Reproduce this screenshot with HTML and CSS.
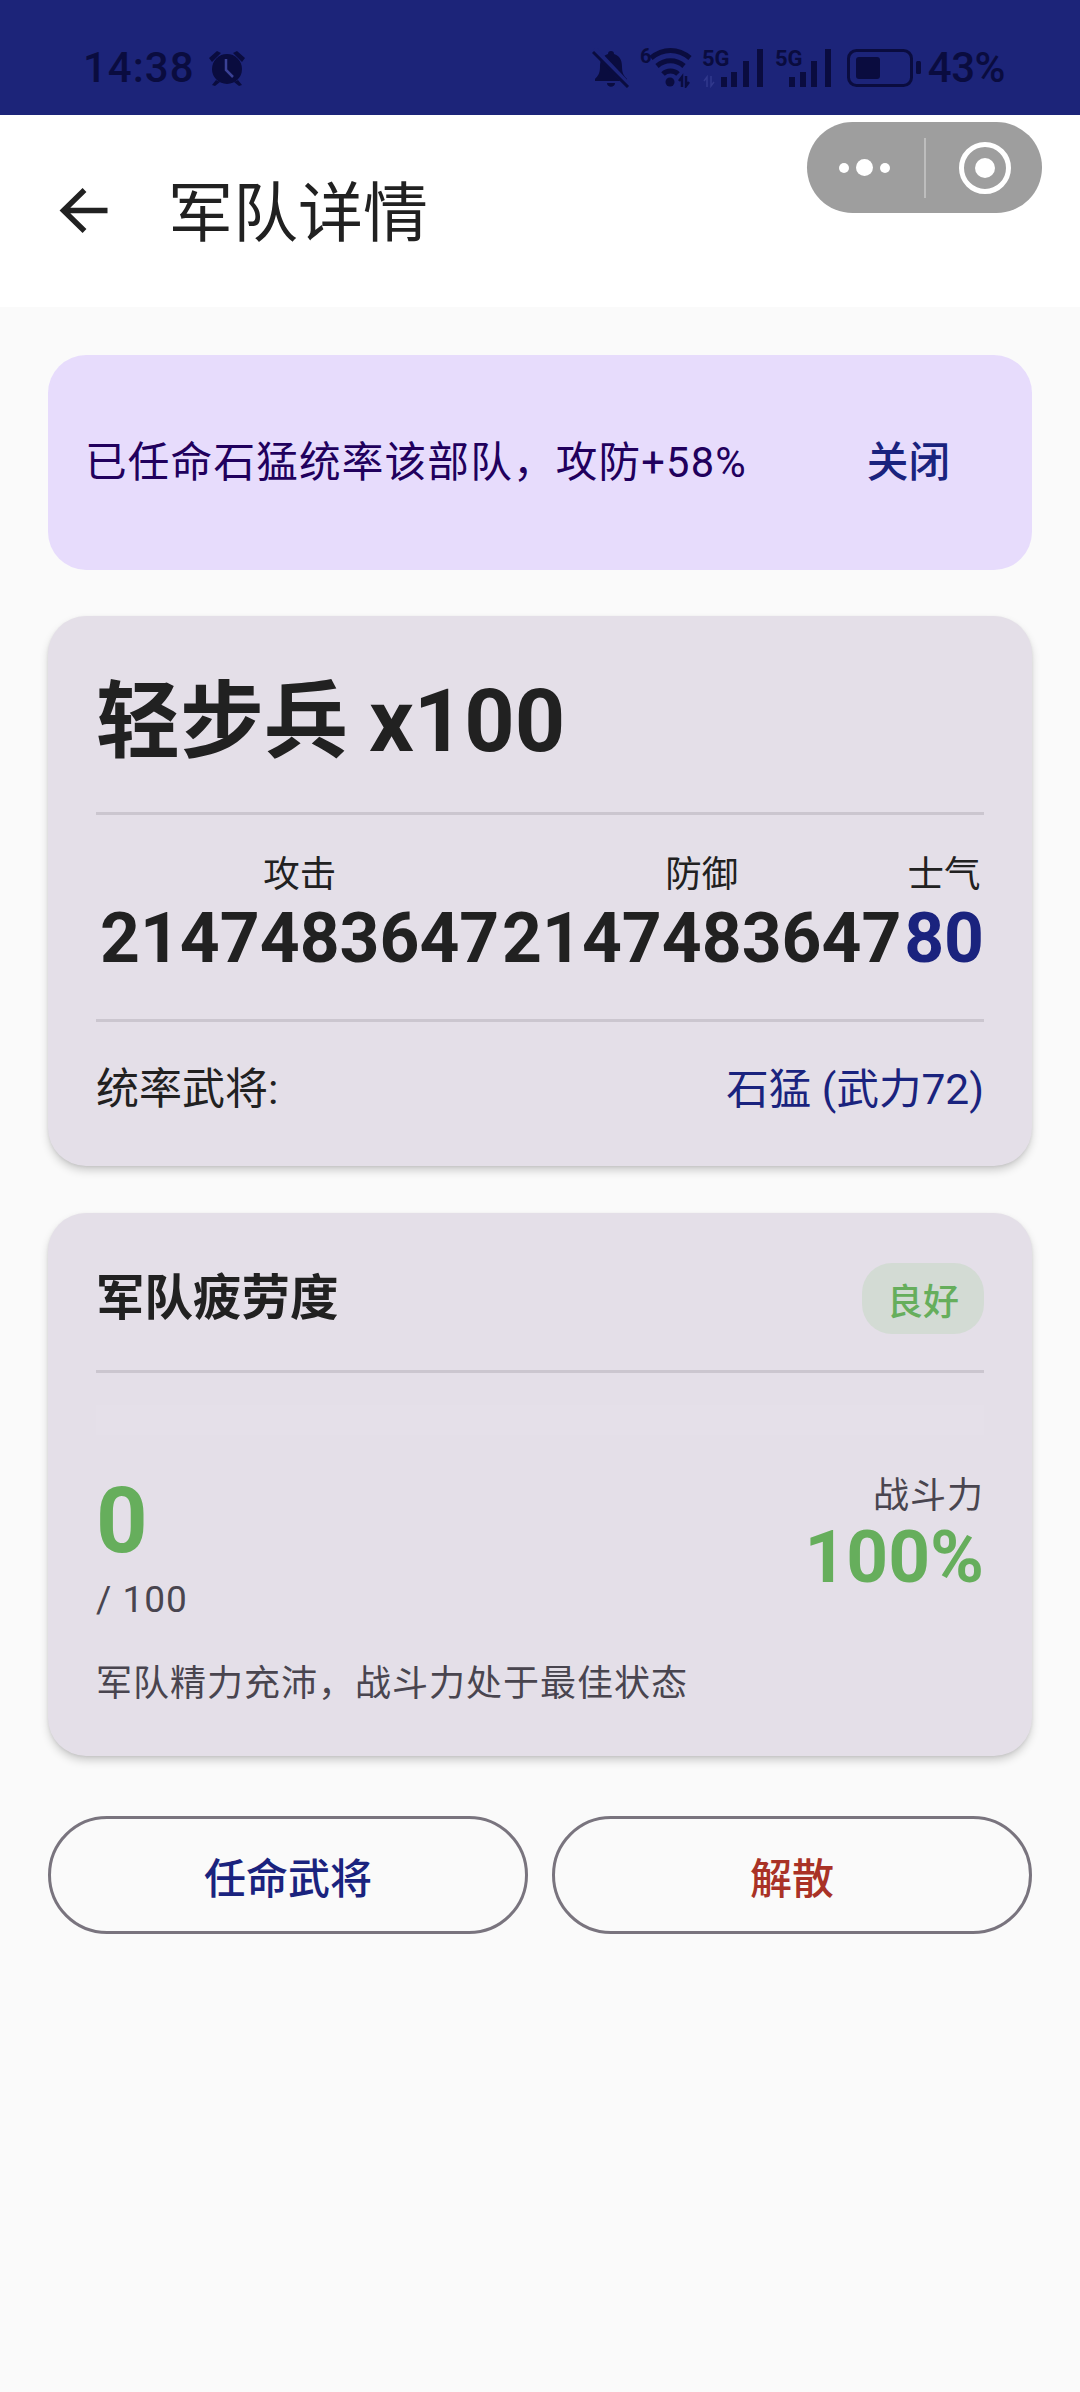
FILE: index.html
```html
<!DOCTYPE html>
<html lang="zh-CN">
<head>
<meta charset="utf-8">
<title>军队详情</title>
<link rel="stylesheet" href="styles.css">
</head>
<body>
<div class="phone">
  <header class="status">
    <div class="status-left">
      <span class="clock">14:38</span>
      <svg class="ico-alarm" viewBox="0 0 38 38"><circle cx="19" cy="20" r="15" fill="#0a0c3f"/><path d="M1 9 9 2l4 2-9 9zM37 9l-8-7-4 2 9 9zM8 31l-4 5 3 1 5-4zM30 31l4 5-3 1-5-4z" fill="#0a0c3f"/><path d="M18 10v11l7 7" fill="none" stroke="#3b4196" stroke-width="2.5"/></svg>
    </div>
    <div class="status-right">
      <svg class="ico-bell" viewBox="0 0 38 40"><path d="M19 3c2 0 3 1 3 3 7 2 8 8 8 13 0 6 2 9 5 12v2H3v-2c3-3 5-6 5-12 0-5 1-11 8-13 0-2 1-3 3-3zM15 35h8c0 5-8 5-8 0z" fill="#0a0c3f"/><path d="M2 1 37 38" stroke="#1c2479" stroke-width="6"/><path d="M1 4 36 39" stroke="#0a0c3f" stroke-width="3"/></svg>
      <svg class="ico-wifi" viewBox="0 -6 52 46"><text x="0" y="15" class="svg-tiny">6</text><path d="M11 10C23 0 38 0 50 10M17 18c8-7 19-7 27 0M23 26c4-4 11-4 15 0" fill="none" stroke="#0a0c3f" stroke-width="5"/><circle cx="30" cy="34" r="4.500" fill="#0a0c3f"/><path d="M42 39V29l-3 4M46 28v10l3-4" fill="none" stroke="#0a0c3f" stroke-width="2.500"/></svg>
      <svg class="ico-sig" viewBox="0 -6 62 46"><text x="0" y="18" class="svg-five">5G</text><path d="M5 39V29l-3 4M9 28v10l3-4" fill="none" stroke="#3b4196" stroke-width="1.500" opacity=".7"/><path d="M19 29h6v10h-6zM29 24h6v15h-6zM41 13h6v26h-6zM55 1h6v38h-6z" fill="#0a0c3f"/></svg>
      <svg class="ico-sig ico-sig2" viewBox="0 -6 57 46"><text x="0" y="18" class="svg-five">5G</text><path d="M14 29h6v10h-6zM25 24h6v15h-6zM36 13h6v26h-6zM50 1h6v38h-6z" fill="#0a0c3f"/></svg>
      <svg class="ico-batt" viewBox="0 0 74 38"><rect x="1.500" y="1.500" width="63" height="35" rx="8" fill="none" stroke="#0a0c3f" stroke-width="3"/><rect x="9" y="8" width="24" height="22" rx="3" fill="#0a0c3f"/><rect x="69" y="12" width="5" height="13" rx="1.500" fill="#0a0c3f"/></svg>
      <span class="batt-text">43%</span>
    </div>
  </header>

  <nav class="appbar">
    <svg class="back" viewBox="0 0 50 48"><path d="M49 23.500H5M26 3 5 23.500 26 44" fill="none" stroke="#212121" stroke-width="5.500"/></svg>
    <h1 class="appbar-title">军队详情</h1>
    <div class="capsule">
      <span class="cap-more"><i class="dot"></i><i class="dot dot-big"></i><i class="dot"></i></span>
      <span class="cap-sep"></span>
      <span class="cap-target"><i class="cap-core"></i></span>
    </div>
  </nav>

  <main class="content">
    <section class="banner">
      <p class="banner-msg">已任命石猛统率该部队，攻防+58%</p>
      <span class="banner-act">关闭</span>
    </section>

    <section class="card card-army">
      <h2 class="army-name">轻步兵 <span class="army-count">x100</span></h2>
      <hr class="rule">
      <div class="stats">
        <div class="stat"><span class="stat-label">攻击</span><span class="stat-value">2147483647</span></div>
        <div class="stat"><span class="stat-label">防御</span><span class="stat-value">2147483647</span></div>
        <div class="stat"><span class="stat-label">士气</span><span class="stat-value stat-blue">80</span></div>
      </div>
      <hr class="rule">
      <div class="general">
        <span class="general-label">统率武将:</span>
        <span class="general-name">石猛 (武力72)</span>
      </div>
    </section>

    <section class="card card-fatigue">
      <div class="fatigue-head">
        <h3 class="fatigue-title">军队疲劳度</h3>
        <span class="badge">良好</span>
      </div>
      <hr class="rule">
      <div class="track"></div>
      <div class="fatigue-nums">
        <div class="fatigue-left">
          <span class="fatigue-value">0</span>
          <span class="fatigue-max">/ 100</span>
        </div>
        <div class="fatigue-right">
          <span class="power-label">战斗力</span>
          <span class="power-value">100%</span>
        </div>
      </div>
      <p class="fatigue-note">军队精力充沛，战斗力处于最佳状态</p>
    </section>

    <div class="actions">
      <button class="btn btn-blue">任命武将</button>
      <button class="btn btn-red">解散</button>
    </div>
  </main>
</div>
</body>
</html>
```

FILE: styles.css
```css
* { box-sizing: border-box; }
html, body { margin: 0; padding: 0; }
body {
  width: 1080px;
  height: 2392px;
  overflow: hidden;
  background: #fafafa;
  color: #212121;
  font-family: Roboto, "Noto Sans CJK SC", sans-serif;
}
.phone { display: flex; flex-direction: column; height: 2392px; }

/* status bar */
.status {
  height: 115px;
  background: #1c2479;
  color: #0a0c3f;
  display: flex;
  justify-content: space-between;
  padding: 48px 75px 0 83px;
  font-weight: 500;
  font-size: 42px;
  line-height: 40px;
}
.status-left { display: flex; gap: 13px; height: 40px; align-items: center; }
.status-right { display: flex; height: 40px; align-items: center; }
.clock { letter-spacing: 1px; }
.ico-alarm { width: 38px; height: 38px; }
.ico-bell { width: 38px; height: 40px; margin-right: 10px; }
.ico-wifi { width: 52px; height: 46px; margin-right: 10px; align-self: flex-end; }
.ico-sig { width: 62px; height: 46px; margin-right: 11px; align-self: flex-end; }
.ico-sig2 { width: 57px; margin-right: 15px; }
.ico-batt { width: 74px; height: 38px; margin-right: 7px; }
.batt-text { letter-spacing: -.5px; }
.svg-tiny { font: 700 20px Roboto, sans-serif; fill: #0a0c3f; }
.svg-five { font: 700 22px Roboto, sans-serif; fill: #0a0c3f; }

/* app bar */
.appbar {
  position: relative;
  height: 192px;
  background: #fff;
  display: flex;
  align-items: center;
  padding-left: 58px;
  gap: 59px;
}
.back { width: 51px; height: 48px; }
.appbar-title { margin: 5px 0 0; font-size: 65px; font-weight: 400; line-height: 80px; }
.capsule {
  position: absolute;
  left: 807px;
  top: 7px;
  width: 235px;
  height: 91px;
  border-radius: 46px;
  background: #9e9e9e;
  display: flex;
  align-items: center;
}
.cap-more { width: 117px; display: flex; align-items: center; justify-content: flex-end; gap: 7px; padding-right: 34px; }
.dot { width: 10px; height: 10px; border-radius: 50%; background: #fff; display: block; }
.dot-big { width: 17px; height: 17px; }
.cap-sep { width: 2px; height: 60px; background: #bdbdbd; }
.cap-target {
  margin-left: 33px;
  width: 52px;
  height: 52px;
  border: 5px solid #fff;
  border-radius: 50%;
  display: flex;
  align-items: center;
  justify-content: center;
}
.cap-core { width: 20px; height: 20px; border-radius: 50%; background: #fff; display: block; }

/* content */
.content { padding: 48px 47px 0; display: flex; flex-direction: column; }
.banner {
  margin: 0 1px;
  height: 215px;
  border-radius: 38px;
  background: #e7dcfc;
  display: flex;
  align-items: center;
  justify-content: space-between;
  padding: 0 82px 0 37px;
}
.banner-msg { margin: 0; font-size: 41.600px; line-height: 60px; color: #21005d; letter-spacing: 1.200px; }
.banner-act { font-size: 41.600px; line-height: 60px; font-weight: 500; color: #1a237e; }

.card {
  margin: 0 1px;
  background: #e4dfe8;
  border-radius: 38px;
  box-shadow: 0 5px 10px -1px rgba(0,0,0,.2), 0 1px 3px rgba(0,0,0,.07);
  padding: 0 48px;
}
.rule { margin: 0; border: 0; height: 3px; background: #cbc6cf; }

.card-army { margin-top: 46px; height: 550px; padding-top: 50px; }
.army-name { margin: 0; height: 146px; font-size: 84px; line-height: 114px; font-weight: 700; }
.army-count { font-size: 88px; line-height: 1; }
.stats { display: flex; justify-content: space-between; height: 204px; padding: 37px 0 0 4px; }
.stat { display: flex; flex-direction: column; align-items: center; }
.stat-label { font-size: 36.500px; line-height: 44px; padding-top: 1px; }
.stat-value { font-size: 69.600px; line-height: 82px; font-weight: 700; }
.stat-blue { color: #1a237e; }
.general { display: flex; justify-content: space-between; align-items: center; height: 126px; font-size: 43px; }
.general-label { color: #212121; }
.general-name { color: #1a237e; font-size: 42.500px; }

.card-fatigue { margin-top: 47px; height: 543px; padding-top: 50px; }
.fatigue-head { display: flex; justify-content: space-between; align-items: center; height: 71px; margin-bottom: 36px; }
.fatigue-title { margin: 0; font-size: 48.500px; line-height: 71px; font-weight: 700; }
.badge {
  width: 122px;
  height: 71px;
  border-radius: 30px;
  background: #d3dbd4;
  color: #66ae5c;
  font-size: 36px;
  font-weight: 500;
  display: flex;
  align-items: center;
  justify-content: center;
}
.track { height: 30px; margin-top: 32px; background: #e5e0e9; }
.fatigue-nums { display: flex; justify-content: space-between; margin-top: 30px; height: 190px; }
.fatigue-left, .fatigue-right { display: flex; flex-direction: column; }
.fatigue-right { align-items: flex-end; }
.fatigue-value { font-size: 90px; line-height: 106px; font-weight: 700; color: #66ae5c; padding-top: 4px; }
.fatigue-max { font-size: 37px; line-height: 50px; color: #49454f; letter-spacing: 1px; }
.power-label { font-size: 36px; line-height: 50px; color: #49454f; letter-spacing: 1px; margin-top: 6px; }
.power-value { font-size: 73px; line-height: 72px; font-weight: 700; color: #66ae5c; }
.fatigue-note { margin: 4px 0 0; font-size: 36px; line-height: 50px; color: #49454f; letter-spacing: 1px; }

.actions { display: flex; justify-content: space-between; margin: 60px 1px 0; }
.btn {
  width: 480px;
  height: 118px;
  border: 3px solid #79747e;
  border-radius: 59px;
  background: transparent;
  font-family: inherit;
  font-size: 42px;
  font-weight: 500;
}
.btn-blue { color: #1a237e; }
.btn-red { color: #a93226; }
```
